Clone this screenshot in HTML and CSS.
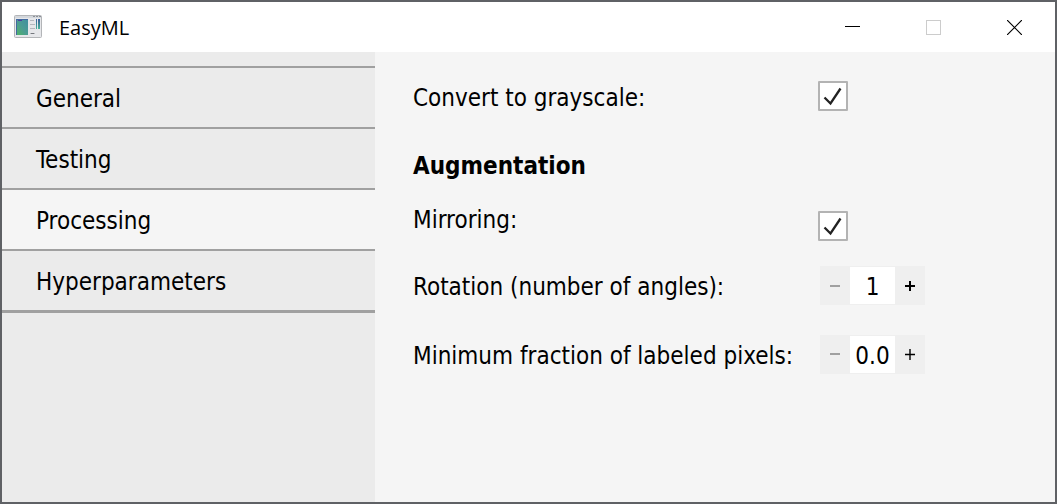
FILE: index.html
```html
<!DOCTYPE html>
<html lang="en">
<head>
<meta charset="utf-8">
<title>EasyML</title>
<link rel="stylesheet" href="styles.css">
</head>
<body>
<div class="window">
  <header class="titlebar">
    <svg class="app-icon" width="28" height="24" viewBox="0 0 28 24" aria-hidden="true">
      <defs>
        <linearGradient id="pane" x1="1" y1="0" x2="0" y2="1">
          <stop offset="0" stop-color="#3f8fa0"/><stop offset="0.5" stop-color="#4c9c94"/><stop offset="1" stop-color="#4fb565"/>
        </linearGradient>
        <linearGradient id="bars" x1="0" y1="0" x2="0" y2="1">
          <stop offset="0" stop-color="#3a5c9a"/><stop offset="1" stop-color="#48b59a"/>
        </linearGradient>
      </defs>
      <rect x="0.5" y="0.5" width="27" height="22" rx="1" fill="#e6e7ea" stroke="#b3b5b8"/>
      <path d="M1 1h26v2H1z" fill="#d3d7dc"/>
      <path d="M19 1.500h2m1 0h2m1 0h2" stroke="#8c9096"/>
      <path d="M2 4h12v16H2z" fill="url(#pane)"/>
      <path d="M2 4.500h12M2.500 4v16" stroke="#4269a0"/>
      <path d="M4 5h4v1H4z" fill="#4a3f9c"/>
      <path d="M16 5.500h4m-4 4h5m-5 4h5m-5 5h5" stroke="#b4b7bc"/>
      <path d="M22 4h1v10h-1zM24 4h2v10h-2z" fill="url(#bars)"/>
      <path d="M17 18.500h3" stroke="#75787d"/>
    </svg>
    <h1 class="title">EasyML</h1>
    <div class="window-buttons">
      <button class="window-button" type="button" aria-label="Minimize">
        <svg width="15" height="15" viewBox="0 0 15 15"><path d="M0 6.500h15" stroke="#000"/></svg>
      </button>
      <button class="window-button" type="button" aria-label="Maximize" disabled>
        <svg width="15" height="15" viewBox="0 0 15 15"><rect x="0.5" y="0.5" width="14" height="14" fill="none" stroke="#ccc"/></svg>
      </button>
      <button class="window-button" type="button" aria-label="Close">
        <svg width="15" height="15" viewBox="0 0 15 15"><path d="M0 0l15 15M15 0L0 15" stroke="#000" stroke-width="1.200"/></svg>
      </button>
    </div>
  </header>
  <div class="body">
    <nav class="sidebar">
      <button class="tab" type="button">General</button>
      <button class="tab" type="button">Testing</button>
      <button class="tab tab-active" type="button" aria-current="page">Processing</button>
      <button class="tab" type="button">Hyperparameters</button>
    </nav>
    <main class="settings">
      <div class="row">
        <label class="label" for="grayscale">Convert to grayscale:</label>
        <input class="check" id="grayscale" type="checkbox" checked>
      </div>
      <h2 class="heading">Augmentation</h2>
      <div class="row row-mirroring">
        <label class="label" for="mirroring">Mirroring:</label>
        <input class="check" id="mirroring" type="checkbox" checked>
      </div>
      <div class="row">
        <label class="label" for="rotation">Rotation (number of angles):</label>
        <div class="spin">
          <button class="step" type="button" aria-label="Decrease rotation" disabled>
            <svg width="12" height="12" viewBox="0 0 12 12"><path d="M1 7h10" stroke="#a0a0a0" stroke-width="2"/></svg>
          </button>
          <input class="value" id="rotation" type="text" value="1">
          <button class="step" type="button" aria-label="Increase rotation">
            <svg width="12" height="12" viewBox="0 0 12 12"><path d="M1 7h10M6 2v10" stroke="#000" stroke-width="2"/></svg>
          </button>
        </div>
      </div>
      <div class="row">
        <label class="label" for="fraction">Minimum fraction of labeled pixels:</label>
        <div class="spin">
          <button class="step" type="button" aria-label="Decrease fraction" disabled>
            <svg width="12" height="12" viewBox="0 0 12 12"><path d="M1 6h10" stroke="#a0a0a0" stroke-width="2"/></svg>
          </button>
          <input class="value" id="fraction" type="text" value="0.0">
          <button class="step" type="button" aria-label="Increase fraction">
            <svg width="12" height="12" viewBox="0 0 12 12"><path d="M1 6.500h10M6 1v11" stroke="#000" stroke-width="1.400"/></svg>
          </button>
        </div>
      </div>
    </main>
  </div>
</div>
</body>
</html>
```
FILE: styles.css
```css
* {
  box-sizing: border-box;
}

body {
  margin: 0;
  color: #000;
  font: 24px/32px "DejaVu Sans Condensed", "Open Sans", sans-serif;
}

button,
input {
  margin: 0;
  padding: 0;
  border: 0;
  color: inherit;
  font: inherit;
}

svg {
  display: block;
}

.window {
  display: flex;
  flex-direction: column;
  min-height: 100vh;
  border: 2px solid #5f6165;
  background: #f5f5f5;
}

.titlebar {
  display: flex;
  align-items: center;
  height: 50px;
  padding-left: 12px;
  background: #fff;
}

.title {
  margin: 0 0 0 17px;
  padding-top: 2px;
  font-family: "Open Sans", sans-serif;
  font-size: 20px;
  font-weight: 400;
  line-height: 24px;
}

.window-buttons {
  display: flex;
  align-self: stretch;
  margin-left: auto;
}

.window-button {
  display: grid;
  place-items: center;
  width: 81px;
  background: transparent;
}

.body {
  display: flex;
  flex: 1;
}

.sidebar {
  flex: 0 0 373px;
  padding-top: 14px;
  background: #ebebeb;
}

.tab {
  display: block;
  width: 100%;
  height: 61px;
  padding: 2px 0 0 34px;
  border-top: 2px solid #a0a0a0;
  background: transparent;
  text-align: left;
}

.tab:last-child {
  height: 64px;
  border-bottom: 3px solid #a0a0a0;
}

.tab-active {
  background: #f5f5f5;
}

.settings {
  flex: 1;
  padding: 24px 38px;
}

.row {
  display: grid;
  grid-template-columns: 405px auto;
  align-items: center;
  justify-content: start;
  min-height: 40px;
  margin-bottom: 29px;
}

.label {
  padding-top: 4px;
}

.row-mirroring {
  min-height: 38px;
  margin-bottom: 24px;
}

.row-mirroring .label {
  align-self: start;
  padding-top: 1px;
}

.row-mirroring .check {
  align-self: end;
}

.heading {
  margin: 0 0 21px;
  padding-top: 5px;
  font-size: 24px;
  font-weight: 700;
  line-height: 32px;
}

.check {
  appearance: none;
  width: 30px;
  height: 30px;
  border: 2px solid #b3b3b3;
  border-radius: 1px;
  background: #fff;
}

.check:checked {
  background: #fff url("data:image/svg+xml,%3Csvg xmlns='http://www.w3.org/2000/svg' viewBox='0 0 26 26'%3E%3Cpath d='M4.500 14.500l6 6L20.500 5.500' fill='none' stroke='%23222' stroke-width='2.300'/%3E%3C/svg%3E") center / 26px 26px no-repeat;
}

.spin {
  display: flex;
  align-items: stretch;
  height: 39px;
  margin-left: 2px;
  padding: 1px 0;
  background: #efefef;
}

.step {
  display: grid;
  place-items: center;
  width: 30px;
  background: transparent;
}

.value {
  width: 45px;
  padding-top: 4px;
  background: #fff;
  text-align: center;
}
```
